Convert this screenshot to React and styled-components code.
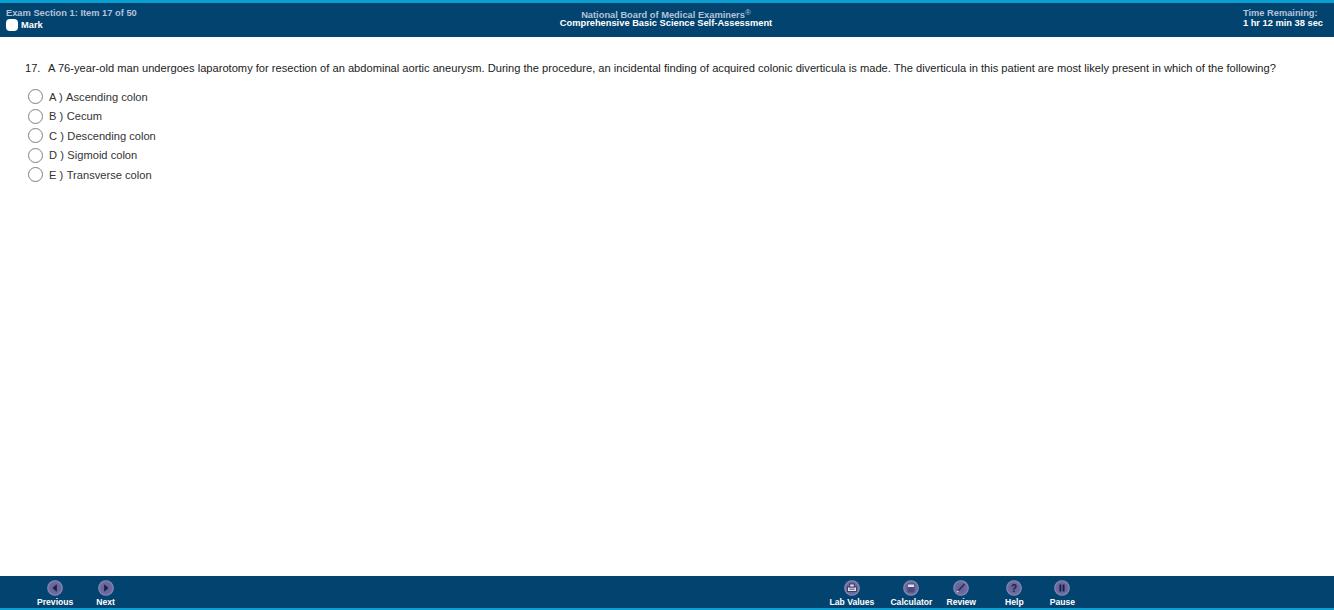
import React from 'react';
import styled, { createGlobalStyle } from 'styled-components';

const GlobalStyle = createGlobalStyle`
    html, body {
        margin: 0;
        padding: 0;
        background: #ffffff;
    }
    body {
        font-family: 'Liberation Sans', Arial, sans-serif;
        overflow: hidden;
    }
`;

const Page = styled.div`
    display: flex;
    flex-direction: column;
    height: 610px;
`;

const Header = styled.header`
    display: grid;
    grid-template-columns: 1fr auto 1fr;
    height: 34px;
    padding: 0 11px 0 6px;
    border-top: 3px solid #0a9fd0;
    background-color: #03436f;
    color: #ffffff;
    font-size: 9.3px;
    font-weight: bold;
    line-height: 11px;
`;

const HeaderLeft = styled.div`
    display: flex;
    flex-direction: column;
    padding-top: 5px;
`;

const HeaderCenter = styled.div`
    padding: 8px 0 0 3px;
    text-align: center;
    line-height: 8px;
`;

const HeaderRight = styled.div`
    justify-self: end;
    padding-top: 5px;
    line-height: 10px;
`;

const Muted = styled.div`
    color: #b4c3da;
`;

const Mark = styled.div`
    display: flex;
    align-items: center;
    gap: 3px;
`;

const MarkBox = styled.span`
    width: 12px;
    height: 12px;
    border-radius: 4px;
    background-color: #ffffff;
`;

const Registered = styled.sup`
    font-size: 8px;
    font-weight: normal;
    line-height: 0;
    vertical-align: 3px;
`;

const Main = styled.main`
    flex: 1;
    padding: 24px 25px 0;
    color: #222222;
    font-size: 11.14px;
`;

const Question = styled.div`
    display: flex;
    line-height: 14px;
    white-space: nowrap;
`;

const QuestionNumber = styled.span`
    flex: none;
    width: 23px;
`;

const Options = styled.div`
    display: flex;
    flex-direction: column;
    gap: 4.5px;
    margin: 14px 0 0 3px;
`;

const Option = styled.label`
    display: flex;
    align-items: center;
    height: 15px;
    color: #333333;
`;

const Radio = styled.span`
    box-sizing: border-box;
    flex: none;
    width: 15px;
    height: 15px;
    margin-right: 6px;
    border: 1px solid #7f7f7f;
    border-radius: 50%;
    background-color: #ffffff;
`;

const OptionLetter = styled.span`
    margin-right: 3.5px;
`;

const Footer = styled.footer`
    display: flex;
    justify-content: space-between;
    height: 32px;
    padding: 0 259px 0 37px;
    border-bottom: 2px solid #0a9fd0;
    background-color: #03436f;
`;

const ButtonGroup = styled.div`
    display: flex;
`;

const NavButton = styled.button`
    display: flex;
    flex-direction: column;
    align-items: center;
    padding: 4px 0 0;
    margin-left: ${(props) => props.$gap || 0}px;
    border: 0;
    background: none;
    color: #ffffff;
    font-family: inherit;
    font-size: 8.6px;
    font-weight: bold;
    line-height: 10px;
`;

const IconDisc = styled.svg`
    display: block;
    width: 16px;
    height: 16px;
    margin-bottom: 1px;
`;

const Disc = ({ children }) => (
    <IconDisc viewBox="0 0 16 16">
        <defs>
            <radialGradient id="disc" cx="50%" cy="50%" r="55%">
                <stop offset="0%" stopColor="#5f5d92" />
                <stop offset="70%" stopColor="#6e6c9f" />
                <stop offset="100%" stopColor="#a3a5c6" />
            </radialGradient>
        </defs>
        <circle cx="8" cy="8" r="7.8" fill="url(#disc)" />
        {children}
    </IconDisc>
);

const icons = {
    previous: <path d="M9.8 4.2 5.6 8l4.2 3.8z" fill="#1d1a45" />,
    next: <path d="M6.2 4.2 10.4 8l-4.2 3.8z" fill="#1d1a45" />,
    lab: (
        <g fill="#e4e3f0" stroke="#26234f" strokeWidth="0.8">
            <rect x="3.5" y="7" width="9" height="4.5" />
            <rect x="5.8" y="4" width="4.4" height="3" />
            <path d="M5.5 9.2h5" />
        </g>
    ),
    calculator: (
        <g>
            <rect x="4.5" y="3.5" width="7" height="9" rx="1" fill="#4d4a80" />
            <rect x="5" y="4.5" width="6" height="2.5" fill="#e4e3f0" />
        </g>
    ),
    review: (
        <g fill="none" strokeWidth="1.4">
            <path d="M4.5 11.5 7 9l4.5-5" stroke="#2b2856" />
            <path d="M4 12l1.5-1" stroke="#e4e3f0" />
        </g>
    ),
    help: (
        <text x="8" y="11.5" fill="#1d1a45" fontSize="10" fontWeight="bold" textAnchor="middle">
            ?
        </text>
    ),
    pause: <path d="M5.5 4.5h1.8v7H5.5zM8.7 4.5h1.8v7H8.7z" fill="#1d1a45" />,
};

const leftButtons = [
    { label: 'Previous', icon: 'previous' },
    { label: 'Next', icon: 'next', gap: 23 },
];

const rightButtons = [
    { label: 'Lab Values', icon: 'lab' },
    { label: 'Calculator', icon: 'calculator', gap: 16 },
    { label: 'Review', icon: 'review', gap: 14 },
    { label: 'Help', icon: 'help', gap: 29 },
    { label: 'Pause', icon: 'pause', gap: 26 },
];

const options = [
    ['A', 'Ascending colon'],
    ['B', 'Cecum'],
    ['C', 'Descending colon'],
    ['D', 'Sigmoid colon'],
    ['E', 'Transverse colon'],
];

const renderButton = ({ label, icon, gap }) => (
    <NavButton key={label} $gap={gap}>
        <Disc>{icons[icon]}</Disc>
        {label}
    </NavButton>
);

const App = () => {
    return (
        <Page>
            <GlobalStyle />
            <Header>
                <HeaderLeft>
                    <Muted>Exam Section 1: Item 17 of 50</Muted>
                    <Mark>
                        <MarkBox />
                        Mark
                    </Mark>
                </HeaderLeft>
                <HeaderCenter>
                    <Muted>
                        National Board of Medical Examiners<Registered>®</Registered>
                    </Muted>
                    <div>Comprehensive Basic Science Self-Assessment</div>
                </HeaderCenter>
                <HeaderRight>
                    <Muted>Time Remaining:</Muted>
                    <div>1 hr 12 min 38 sec</div>
                </HeaderRight>
            </Header>
            <Main>
                <Question>
                    <QuestionNumber>17.</QuestionNumber>
                    A 76-year-old man undergoes laparotomy for resection of an abdominal aortic aneurysm. During the
                    procedure, an incidental finding of acquired colonic diverticula is made. The diverticula in this
                    patient are most likely present in which of the following?
                </Question>
                <Options>
                    {options.map(([letter, text]) => (
                        <Option key={letter}>
                            <Radio />
                            <OptionLetter>{letter} )</OptionLetter>
                            {text}
                        </Option>
                    ))}
                </Options>
            </Main>
            <Footer>
                <ButtonGroup>{leftButtons.map(renderButton)}</ButtonGroup>
                <ButtonGroup>{rightButtons.map(renderButton)}</ButtonGroup>
            </Footer>
        </Page>
    );
};

export default App;
